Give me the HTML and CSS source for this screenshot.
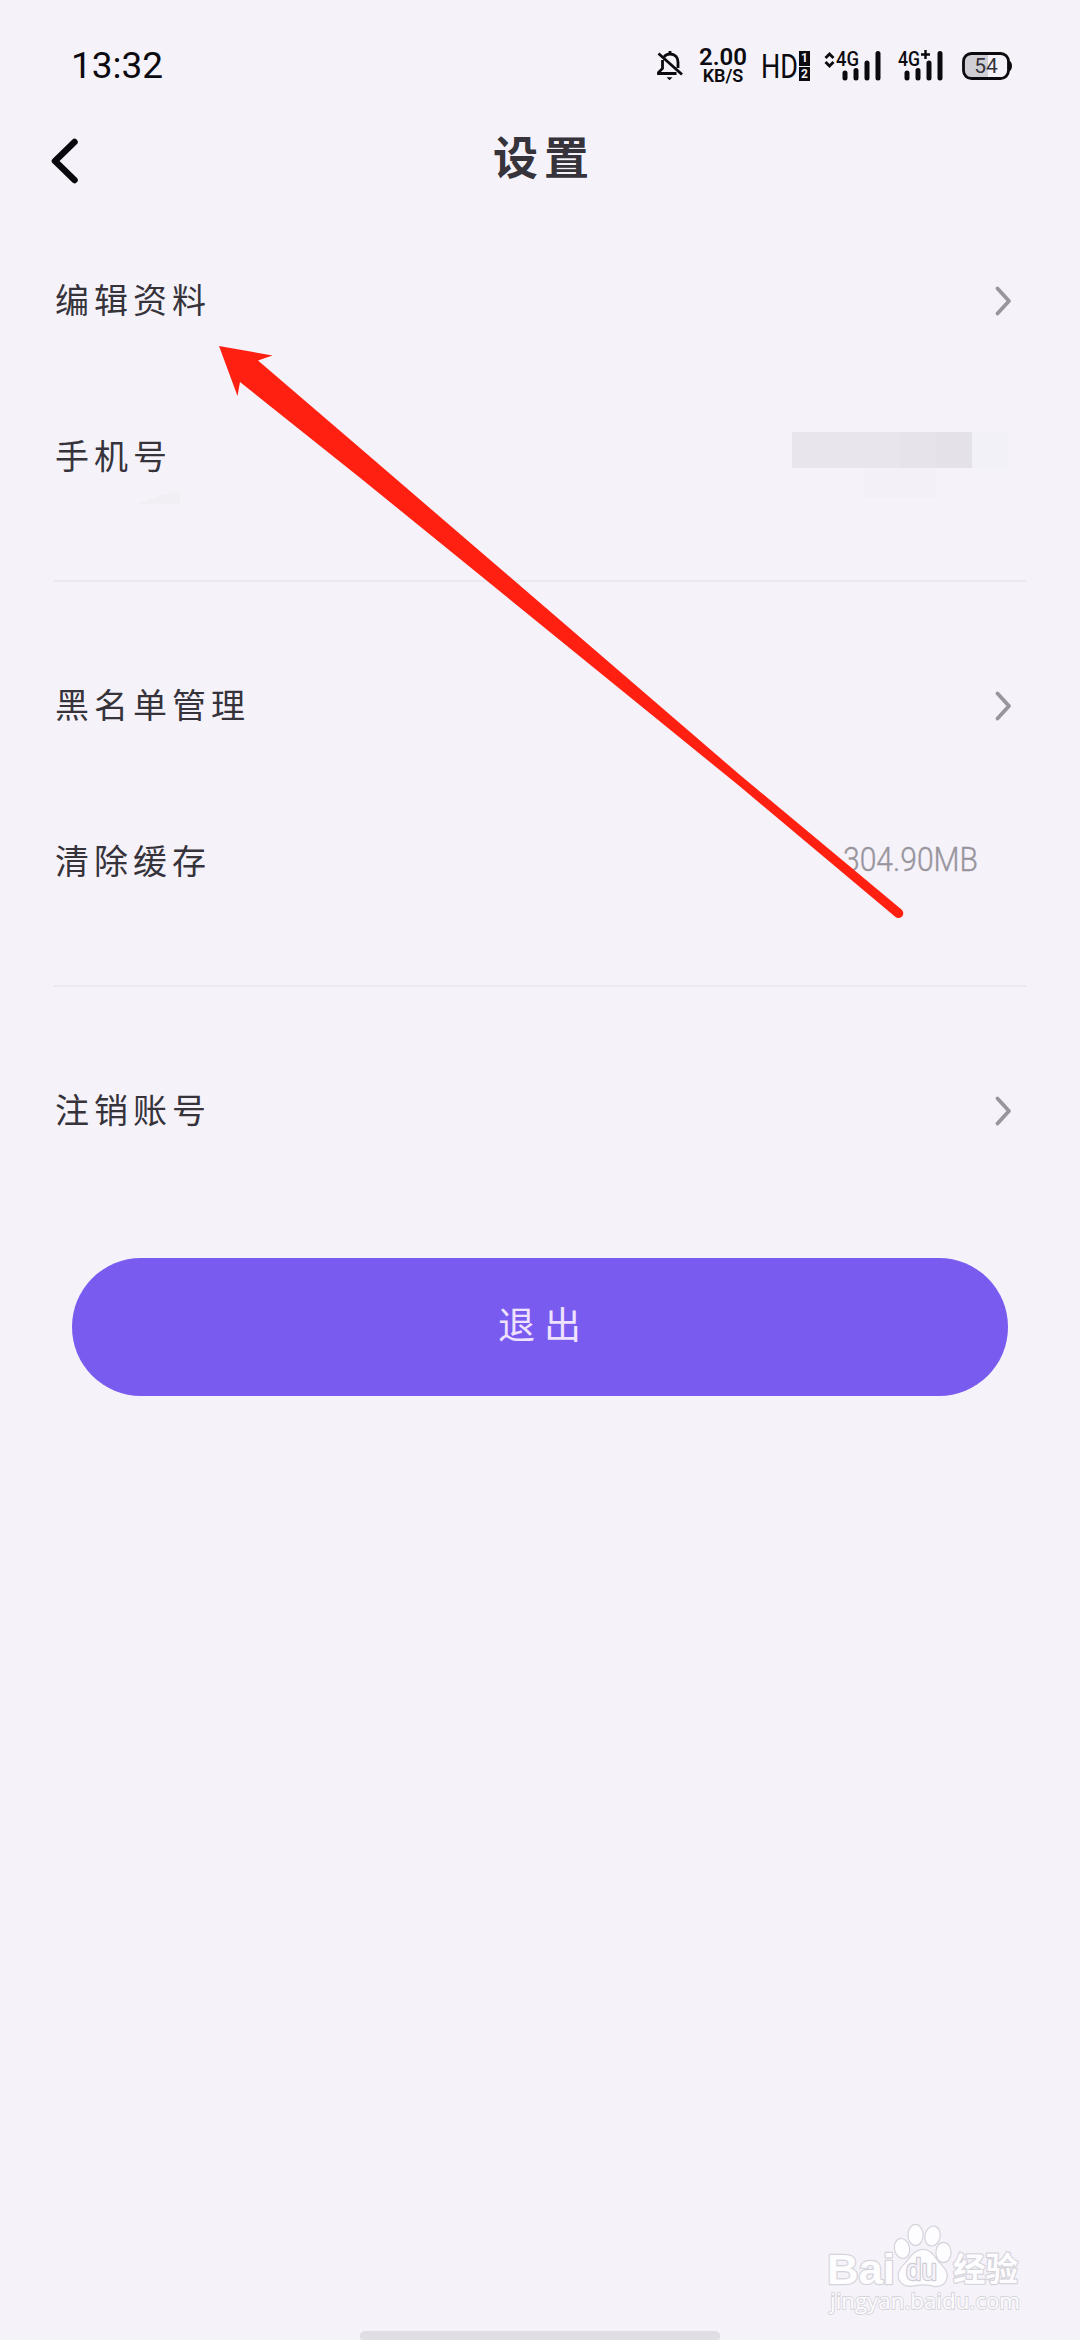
FILE: index.html
```html
<!DOCTYPE html>
<html lang="zh-CN">
<head>
<meta charset="utf-8">
<title>设置</title>
<link rel="stylesheet" href="styles.css">
</head>
<body>
<div class="screen">
  <header class="status">
    <span class="clock">13:32</span>
    <div class="indicators">
      <svg class="bell" width="26" height="32" viewBox="0 0 26 32" fill="none" stroke="#0b0a0e" stroke-width="2.800">
        <path d="M7 7C8.500 5 10.500 4 13 4c5 0 8 3.500 8 8v6"/>
        <path d="M13 1v3M5.500 10v8.500L1.500 22.500v1h18M1.500 3.500L25 24.500"/>
        <path d="M9.500 27.200h6l-3 3z" fill="#0b0a0e" stroke="none"/>
      </svg>
      <div class="speed"><b class="rate">2.00</b><b class="unit">KB/S</b></div>
      <div class="hd">
        <svg width="36" height="32" viewBox="0 0 36 32"><text class="hd-text" x="-1" y="28" textLength="37" lengthAdjust="spacingAndGlyphs">HD</text></svg>
        <div class="sims"><i>1</i><i>2</i></div>
      </div>
      <svg class="signal" width="57" height="32" viewBox="0 0 57 32">
        <path d="M1.500 8l4-4 4 4M1.500 12l4 4 4-4" fill="none" stroke="#0b0a0e" stroke-width="2.800"/>
        <text x="12" y="16" class="net" textLength="23" lengthAdjust="spacingAndGlyphs">4G</text>
        <path d="M21 23v5M32 20.500v7.500M43 13v15M54 3.500v24.500" stroke="#0b0a0e" stroke-width="5" stroke-linecap="round"/>
      </svg>
      <svg class="signal-b" width="46" height="32" viewBox="0 0 46 32">
        <text x="0" y="16" class="net" textLength="22" lengthAdjust="spacingAndGlyphs">4G</text>
        <path d="M23 4.500h9M27.500 0v9" stroke="#0b0a0e" stroke-width="2.400"/>
        <path d="M9 23v5M20 20.500v7.500M31 13v15M42 3.500v24.500" stroke="#0b0a0e" stroke-width="5" stroke-linecap="round"/>
      </svg>
      <svg class="battery" width="52" height="30" viewBox="0 0 52 30">
        <path d="M11 2.500h16v25H11a8 8 0 0 1-8-8v-9a8 8 0 0 1 8-8z" fill="#d0ced5"/>
        <rect x="2.500" y="2.500" width="45" height="25" rx="8" fill="none" stroke="#0b0a0e" stroke-width="2.800"/>
        <path d="M48 9.500c4 1.500 4 9.500 0 11z" fill="#0b0a0e"/>
        <text x="25" y="22" text-anchor="middle" class="level">54</text>
      </svg>
    </div>
  </header>

  <nav class="titlebar">
    <svg class="back" width="30" height="48" viewBox="0 0 30 48"><path d="M25.500 5L6 24l19.500 19" /></svg>
    <h1>设置</h1>
  </nav>

  <main>
    <section class="group">
      <div class="row"><span class="label">编辑资料</span><svg class="chevron" width="20" height="32" viewBox="0 0 20 32"><path d="M3.500 3.500L15 16 3.500 28.500"/></svg></div>
      <div class="row"><span class="label">手机号</span><div class="mask"><i></i><i></i><i></i><i></i><i></i><i></i></div></div>
    </section>
    <section class="group">
      <div class="row"><span class="label">黑名单管理</span><svg class="chevron" width="20" height="32" viewBox="0 0 20 32"><path d="M3.500 3.500L15 16 3.500 28.500"/></svg></div>
      <div class="row"><span class="label">清除缓存</span><svg class="size" width="138" height="44" viewBox="0 0 138 44"><text x="1" y="32" textLength="135" lengthAdjust="spacingAndGlyphs">304.90MB</text></svg></div>
    </section>
    <section class="group">
      <div class="row"><span class="label">注销账号</span><svg class="chevron" width="20" height="32" viewBox="0 0 20 32"><path d="M3.500 3.500L15 16 3.500 28.500"/></svg></div>
    </section>
    <button class="logout">退出</button>
  </main>

  <svg class="smudge" width="42" height="13" viewBox="0 0 42 13"><path d="M0 13L24 4 42 0v13z" fill="#f1eef4"/></svg>

  <svg class="arrow" width="700" height="590" viewBox="210 340 700 590">
    <path d="M219 346L272.500 355.500 258 360.500 360 448 740 775 901.500 909.500A4.700 4.700 0 0 1 895.500 917L740 786.500 360 477.700 240 382 237.500 396z" fill="#ff2011"/>
  </svg>

  <svg class="watermark" width="210" height="110" viewBox="820 2215 210 110">
    <g fill="#fdfcfe" stroke="#d6d4da" stroke-width="2.400" paint-order="stroke" stroke-linejoin="round">
      <text x="827" y="2284" class="wm-brand" textLength="68" lengthAdjust="spacingAndGlyphs">Bai</text>
      <text x="953" y="2281" class="wm-cn" textLength="65" lengthAdjust="spacingAndGlyphs">经验</text>
      <text x="830" y="2309" class="wm-url" textLength="190" lengthAdjust="spacingAndGlyphs">jingyan.baidu.com</text>
      <ellipse cx="902" cy="2248.500" rx="7" ry="9.500" transform="rotate(-12 902 2248.500)"/>
      <ellipse cx="915.500" cy="2235" rx="7" ry="10"/>
      <ellipse cx="932.500" cy="2236" rx="7" ry="9.500" transform="rotate(12 932.500 2236)"/>
      <ellipse cx="943.500" cy="2252.500" rx="7" ry="9.500"/>
      <path d="M923 2250c8 0 11 7 16 13 6 6 9 10 7 16-2 7-9 8-15 6-5-1-11-1-16 0-7 2-14 0-16-7-1-6 2-10 7-15 5-6 9-13 17-13z"/>
      <text x="906" y="2280" class="wm-du" textLength="31" lengthAdjust="spacingAndGlyphs">du</text>
    </g>
  </svg>
  <div class="home"></div>
</div>
</body>
</html>
```
FILE: styles.css
```css
* { box-sizing: border-box; }
body {
  margin: 0;
  background: #f5f2fa;
  color: #36333b;
  font-family: "Noto Sans CJK SC", sans-serif;
}
.screen {
  position: relative;
  width: 1080px;
  height: 2340px;
  overflow: hidden;
}
.status {
  height: 108px;
  padding: 24px 67px 0 71px;
  display: flex;
  align-items: center;
  justify-content: space-between;
  color: #0b0a0e;
  font-family: Roboto, sans-serif;
}
.clock { font-size: 37px; line-height: 84px; }
.indicators { display: flex; align-items: center; }
.speed {
  width: 48px;
  margin-left: 16px;
  display: flex;
  flex-direction: column;
  align-items: center;
}
.rate { font-size: 24px; line-height: 20px; font-weight: 600; }
.unit { font-size: 18px; line-height: 18px; font-weight: 600; }
.hd { margin-left: 15px; display: flex; align-items: center; gap: 1px; }
.hd-text { font: 34px Roboto, sans-serif; fill: #0b0a0e; }
.sims { display: flex; flex-direction: column; gap: 1px; }
.sims i {
  width: 11px;
  height: 14.5px;
  background: #0b0a0e;
  color: #f5f2fa;
  font: bold 12px/15px Roboto, sans-serif;
  text-align: center;
}
.signal { margin-left: 14px; }
.signal-b { margin-left: 17px; }
.battery { margin-left: 17px; }
.net { font: 500 20px Roboto, sans-serif; fill: #0b0a0e; }
.signal, .signal-b { overflow: visible; }
.level { font: 21px Roboto, sans-serif; fill: #34323a; }

.titlebar {
  height: 115px;
  padding-left: 49px;
  display: grid;
  grid-template-columns: 30px 1fr 79px;
  align-items: start;
}
.back { margin-top: 29px; }
.back path {
  fill: none;
  stroke: #09080c;
  stroke-width: 6.5;
  stroke-linecap: round;
  stroke-linejoin: round;
}
h1 {
  margin: 18px 0 0 8px;
  font-size: 45px;
  line-height: 60px;
  font-weight: 700;
  letter-spacing: 6px;
  text-align: center;
}
.group { margin: 0 54px; padding-bottom: 45px; }
.group + .group { padding-top: 46px; border-top: 2px solid #ebe8f0; }
.group:last-of-type { padding-bottom: 0; }
.row {
  height: 156px;
  padding: 0 12px 0 1px;
  display: flex;
  align-items: center;
  justify-content: space-between;
  font-size: 34px;
  letter-spacing: 5px;
}
.label { padding-bottom: 6px; }
.chevron path {
  fill: none;
  stroke: #98959d;
  stroke-width: 3.8;
  stroke-linecap: round;
  stroke-linejoin: round;
}
.mask { display: flex; margin: 0 6px 14px 0; }
.mask i { width: 36px; height: 36px; background: #e8e6ec; }
.mask i:nth-child(4) { background: #e6e4ea; }
.mask i:nth-child(5) { background: #e4e2e8; }
.mask i:nth-child(6) { background: #f3f1f8; }
.mask i:nth-child(3), .mask i:nth-child(4) { box-shadow: 0 30px 0 #f3f1f7; }
.size { margin: 0 34px 2px 0; overflow: visible; }
.size text {
  font: 300 34px Roboto, sans-serif;
  letter-spacing: 0;
  fill: #98959d;
  stroke: #98959d;
  stroke-width: 0.4px;
}
.logout {
  display: block;
  width: 936px;
  height: 138px;
  margin: 69px auto 0;
  padding: 0 0 9px 8px;
  border: 0;
  border-radius: 69px;
  background: #7a5bef;
  color: #eee2ff;
  font: 37px "Noto Sans CJK SC", sans-serif;
  letter-spacing: 9px;
}
.smudge { position: absolute; left: 138px; top: 491px; }
.arrow { position: absolute; left: 210px; top: 340px; }
.watermark { position: absolute; left: 820px; top: 2215px; }
.wm-brand { font: bold 42px "Liberation Sans", sans-serif; }
.wm-cn { font: bold 33px "Noto Sans CJK SC", sans-serif; }
.wm-url { font: 22px "Open Sans", sans-serif; stroke-width: 1.8px; }
.wm-du { font: 29px "Liberation Sans", sans-serif; fill: #f5f2fa; stroke: #cfcdd4; }
.home {
  position: absolute;
  left: 360px;
  bottom: 0;
  width: 360px;
  height: 9px;
  border-radius: 5px 5px 3px 3px;
  background: #e0dde4;
}
```
